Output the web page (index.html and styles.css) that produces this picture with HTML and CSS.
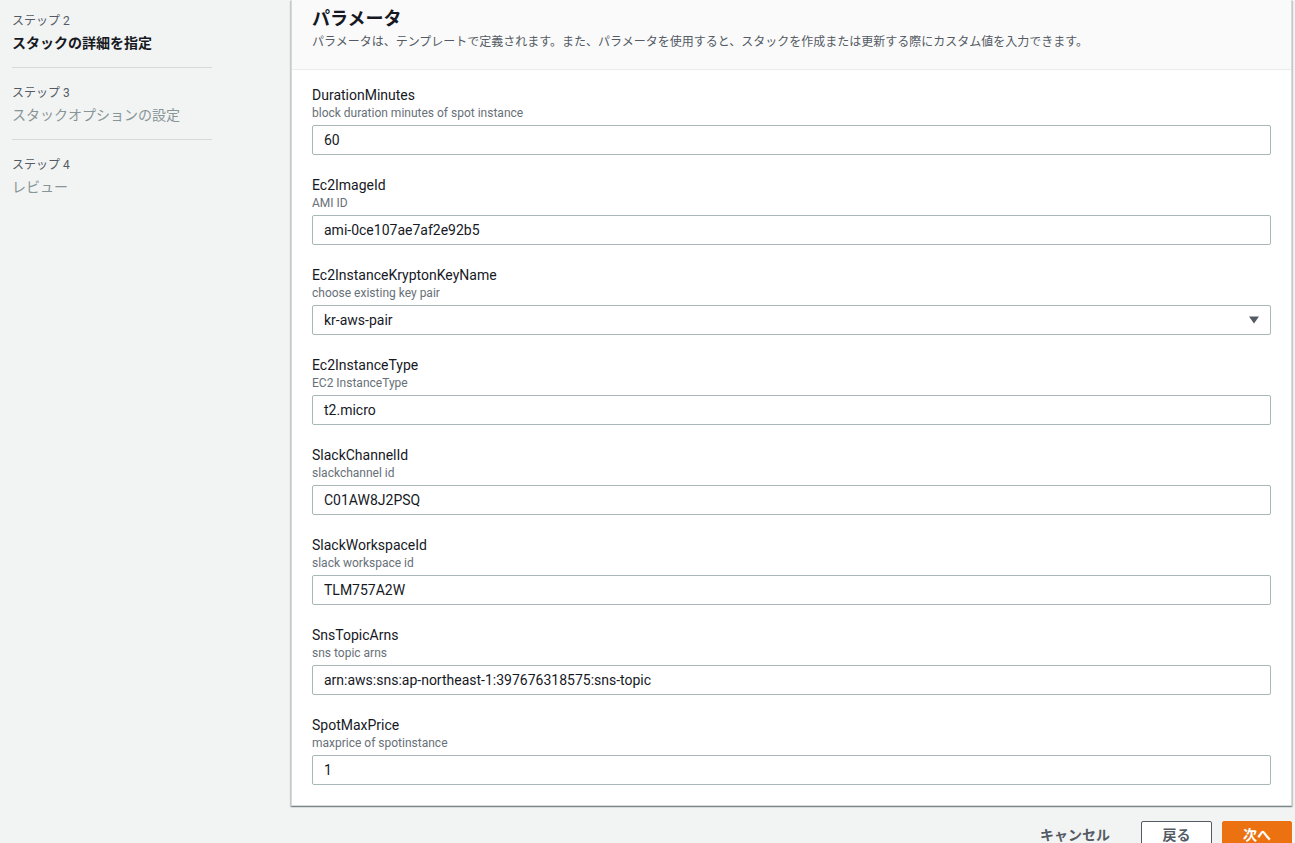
FILE: index.html
```html
<!DOCTYPE html>
<html lang="ja">
<head>
<meta charset="utf-8">
<link rel="stylesheet" href="styles.css">
</head>
<body>
<div class="layout">
  <nav class="nav">
    <div class="step">
      <div class="step-label">ステップ 2</div>
      <div class="step-title active">スタックの詳細を指定</div>
    </div>
    <div class="step">
      <div class="step-label">ステップ 3</div>
      <div class="step-title">スタックオプションの設定</div>
    </div>
    <div class="step last">
      <div class="step-label">ステップ 4</div>
      <div class="step-title">レビュー</div>
    </div>
  </nav>
  <main class="main">
    <section class="card">
      <header class="card-header">
        <h2 class="card-title">パラメータ</h2>
        <p class="card-desc">パラメータは、テンプレートで定義されます。また、パラメータを使用すると、スタックを作成または更新する際にカスタム値を入力できます。</p>
      </header>
      <div class="card-body">
        <div class="field">
          <div class="label">DurationMinutes</div>
          <div class="desc">block duration minutes of spot instance</div>
          <div class="input">60</div>
        </div>
        <div class="field">
          <div class="label">Ec2ImageId</div>
          <div class="desc">AMI ID</div>
          <div class="input">ami-0ce107ae7af2e92b5</div>
        </div>
        <div class="field">
          <div class="label">Ec2InstanceKryptonKeyName</div>
          <div class="desc">choose existing key pair</div>
          <div class="input select"><span>kr-aws-pair</span><svg class="caret" width="12" height="10" viewBox="0 0 12 10"><path d="M1 1.5h10L6 8.5z" fill="#545b64"/></svg></div>
        </div>
        <div class="field">
          <div class="label">Ec2InstanceType</div>
          <div class="desc">EC2 InstanceType</div>
          <div class="input">t2.micro</div>
        </div>
        <div class="field">
          <div class="label">SlackChannelId</div>
          <div class="desc">slackchannel id</div>
          <div class="input">C01AW8J2PSQ</div>
        </div>
        <div class="field">
          <div class="label">SlackWorkspaceId</div>
          <div class="desc">slack workspace id</div>
          <div class="input">TLM757A2W</div>
        </div>
        <div class="field">
          <div class="label">SnsTopicArns</div>
          <div class="desc">sns topic arns</div>
          <div class="input">arn:aws:sns:ap-northeast-1:397676318575:sns-topic</div>
        </div>
        <div class="field">
          <div class="label">SpotMaxPrice</div>
          <div class="desc">maxprice of spotinstance</div>
          <div class="input">1</div>
        </div>
      </div>
    </section>
    <div class="actions">
      <button class="btn btn-link">キャンセル</button>
      <button class="btn btn-normal">戻る</button>
      <button class="btn btn-primary">次へ</button>
    </div>
  </main>
</div>
</body>
</html>
```

FILE: styles.css
```css
html, body {
  margin: 0;
  padding: 0;
}
body {
  background: #f2f3f3;
  font-family: Roboto, "Noto Sans CJK JP", sans-serif;
  color: #16191f;
  overflow: hidden;
  height: 843px;
}
.layout {
  display: flex;
  align-items: flex-start;
}
.nav {
  width: 291px;
  flex: none;
  box-sizing: border-box;
  padding: 12px 0 0 12px;
}
.step {
  width: 200px;
  border-bottom: 1px solid #d5dbdb;
  padding-bottom: 13px;
  margin-bottom: 16px;
}
.step.last {
  border-bottom: none;
}
.step-label {
  font-size: 12px;
  line-height: 18px;
  color: #545b64;
}
.step-title {
  font-size: 14px;
  line-height: 22px;
  margin-top: 2px;
  color: #879596;
}
.step-title.active {
  color: #16191f;
  font-weight: 700;
}
.main {
  width: 1001px;
  flex: none;
}
.card {
  background: #fff;
  border: 1px solid #d5dbdb;
  border-top: none;
  box-shadow: 0 1px 1px 0 rgba(0, 28, 36, 0.3), 1px 1px 1px 0 rgba(0, 28, 36, 0.15), -1px 1px 1px 0 rgba(0, 28, 36, 0.15);
}
.card-header {
  background: #fafafa;
  border-bottom: 1px solid #eaeded;
  padding: 6px 20px 0 20px;
  height: 63px;
}
.card-title {
  margin: 0;
  font-size: 18px;
  line-height: 26px;
  font-weight: 700;
}
.card-desc {
  margin: 1px 0 0 0;
  font-size: 12px;
  line-height: 18px;
  color: #545b64;
}
.card-body {
  padding: 15px 20px 20px 20px;
}
.field + .field {
  margin-top: 20px;
}
.label {
  font-size: 14px;
  line-height: 20px;
  color: #16191f;
}
.desc {
  font-size: 12px;
  line-height: 16px;
  color: #687078;
}
.input {
  margin-top: 4px;
  height: 30px;
  box-sizing: border-box;
  border: 1px solid #aab7b8;
  border-radius: 2px;
  padding: 0 11px;
  font-size: 14px;
  line-height: 28px;
  color: #16191f;
  background: #fff;
}
.select {
  display: flex;
  justify-content: space-between;
  align-items: center;
}
.caret {
  margin-right: -1px;
}
.actions {
  display: flex;
  justify-content: flex-end;
  align-items: center;
  margin-top: 15px;
  gap: 10px;
}
.btn {
  font-family: Roboto, "Noto Sans CJK JP", sans-serif;
  font-size: 14px;
  font-weight: 700;
  height: 32px;
  line-height: 22px;
  border-radius: 2px;
  padding: 2px 20px 6px 20px;
  cursor: pointer;
}
.btn-link {
  background: none;
  border: 1px solid transparent;
  color: #545b64;
}
.btn-normal {
  background: #fff;
  border: 1px solid #545b64;
  color: #545b64;
  width: 71px;
  padding-left: 0;
  padding-right: 0;
}
.btn-primary {
  background: #ec7211;
  border: 1px solid #ec7211;
  color: #fff;
  width: 70px;
  padding-left: 0;
  padding-right: 0;
}
```
